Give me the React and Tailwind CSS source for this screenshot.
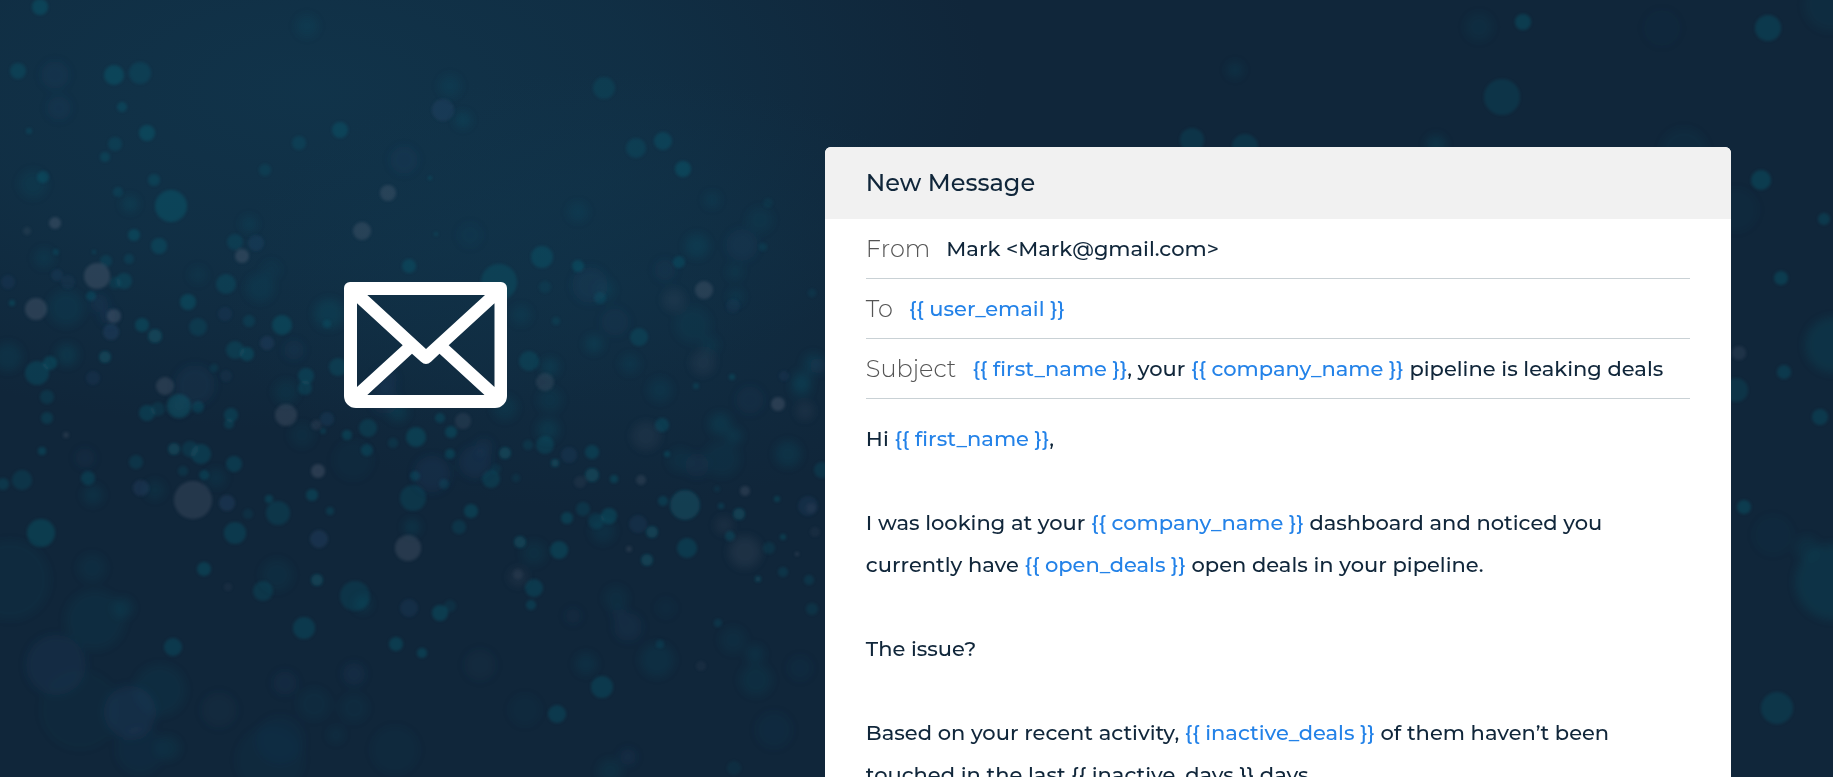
import React from "react";

// Each dot: [x, y, radius, strength]
const TEAL = [
  [40,7,8,0.9],[18,71,8,0.7],[114,75,10,0.9],[140,73,11,0.6],[122,107,5,0.8],[147,133,8,0.9],[115,144,7,0.6],[105,157,5,0.7],
  [43,177,6,0.8],[33,184,14,0.3],[154,180,6,0.7],[171,206,16,0.9],[118,192,5,0.6],[130,204,8,0.5],[134,235,6,0.9],[159,246,8,0.8],
  [340,130,8,0.8],[299,143,7,0.6],[265,170,6,0.5],[249,224,8,0.4],[235,242,8,0.6],[226,284,10,0.7],[188,302,8,0.9],[198,327,9,0.6],
  [282,325,10,0.9],[142,325,7,0.9],[155,336,7,1],[105,357,6,1],[124,281,8,0.7],[115,283,6,0.5],[106,261,6,0.6],[129,259,5,0.6],
  [235,350,9,0.7],[247,354,7,0.9],[50,363,7,0.9],[37,373,12,0.8],[67,355,11,0.5],[8,357,14,0.4],[66,308,18,0.35],[44,258,10,0.35],
  [409,266,7,0.8],[307,26,11,0.35],[306,376,8,0.8],[338,367,9,0.7],[329,314,15,0.5],[327,324,4,0.6],[214,368,4,0.5],[12,303,3,0.9],
  [29,131,3,0.7],[56,252,3,0.7],[94,252,2,0.8],[91,296,5,0.8],[249,321,6,0.6],[260,288,14,0.35],[271,270,10,0.2],[198,275,9,0.25],
  [604,88,11,0.55],[636,148,10,0.6],[663,141,9,0.8],[683,169,8,0.9],[450,86,11,0.35],[463,120,8,0.5],[712,200,8,0.35],[578,212,10,0.35],
  [542,257,11,0.8],[578,266,6,0.9],[499,282,18,0.7],[697,246,12,0.45],[679,262,6,0.8],[545,287,6,0.4],[600,298,6,0.6],[605,290,10,0.3],
  [639,337,9,0.7],[594,344,9,0.5],[529,361,10,0.7],[550,367,9,0.5],[630,364,10,0.35],[732,377,3,0.9],[556,321,4,0.5],[430,178,2,0.9],
  [436,234,2,0.7],[763,247,4,0.5],[736,297,8,0.35],[813,363,10,0.45],[802,380,10,0.45],[521,315,10,0.35],[693,325,18,0.25],[696,386,3,0.7],
  [760,220,13,0.25],[768,203,5,0.3],[735,272,8,0.3],[812,293,4,0.4],[710,345,9,0.3],
  [47,397,7,0.6],[47,418,6,0.7],[42,451,4,0.9],[22,480,10,0.6],[88,478,7,0.8],[93,495,10,0.4],[136,462,7,0.6],[147,413,8,0.8],
  [158,409,7,0.5],[179,406,12,0.9],[198,407,6,0.8],[231,415,7,0.8],[229,424,5,0.7],[174,449,6,1],[201,454,10,0.8],[190,449,8,0.6],
  [183,471,5,0.5],[204,475,5,0.8],[216,478,10,0.35],[234,464,8,0.8],[235,533,11,0.8],[278,513,12,0.65],[269,499,4,0.9],[312,495,6,0.9],
  [330,511,4,0.7],[41,533,14,0.85],[204,569,7,0.9],[263,591,10,0.65],[317,580,6,1],[355,596,15,0.6],[363,604,8,0.5],[304,628,11,0.8],
  [173,647,9,0.8],[396,644,7,0.9],[123,608,10,0.45],[92,568,14,0.25],[95,620,30,0.25],[277,575,16,0.25],[286,392,12,0.3],[305,388,7,0.7],
  [347,435,5,0.9],[368,428,9,0.7],[367,450,6,0.8],[416,437,10,0.9],[415,476,5,0.8],[413,498,13,0.65],[412,527,8,0.5],[323,431,3,0.7],
  [302,435,12,0.25],[3,484,6,0.7],[10,580,40,0.2],[354,708,14,0.2],[314,704,16,0.2],[336,735,8,0.25],[160,690,26,0.25],[168,748,12,0.3],
  [393,443,5,0.5],[398,412,10,0.5],[353,460,20,0.15],[248,514,5,0.4],[155,490,10,0.3],[270,760,34,0.15],[395,750,24,0.15],[80,710,40,0.1],
  [440,418,5,0.8],[451,432,6,0.9],[450,454,5,0.9],[505,453,6,1],[545,445,9,0.7],[548,430,11,0.5],[528,445,5,0.5],[555,463,4,1],
  [592,452,7,0.8],[592,475,7,1],[614,479,4,0.9],[662,425,7,0.8],[720,424,11,0.5],[734,436,8,0.5],[667,454,3,0.9],[788,454,13,0.45],
  [822,470,8,0.6],[722,459,18,0.25],[491,479,9,0.7],[496,469,5,0.4],[471,511,7,0.9],[459,527,7,0.6],[444,484,5,0.6],[567,518,6,0.9],
  [583,509,7,0.6],[609,516,8,0.9],[596,521,8,0.6],[603,531,12,0.35],[663,501,5,0.8],[685,505,15,0.95],[739,514,6,1],[721,506,3,0.8],
  [777,499,3,0.9],[652,532,6,1],[687,548,10,0.8],[647,560,6,1],[520,542,6,1],[559,550,9,0.9],[534,553,12,0.3],[534,588,9,0.8],
  [531,605,5,0.8],[440,613,8,0.9],[450,606,6,0.4],[422,653,5,0.9],[730,536,5,0.8],[769,548,6,0.5],[783,537,3,0.9],[758,579,3,1],
  [783,572,5,0.6],[809,580,5,0.6],[812,609,6,0.5],[718,623,4,0.6],[733,640,13,0.25],[756,680,16,0.3],[755,654,9,0.4],[586,664,11,0.35],
  [602,687,11,0.8],[557,714,9,0.8],[657,660,17,0.35],[660,644,4,0.6],[616,598,12,0.25],[666,608,10,0.15],[525,710,16,0.15],[610,771,12,0.3],
  [734,768,7,0.3],[505,408,12,0.4],[550,400,12,0.3],[660,390,12,0.35],[801,388,10,0.4],[680,460,12,0.25],[516,478,4,0.4],[717,489,3,0.4],
  [1523,22,8,0.9],[1768,28,13,0.8],[1479,27,14,0.25],[1235,70,8,0.4],[1502,97,18,0.6],[1192,140,12,0.6],[1245,147,13,0.6],[1436,145,10,0.5],
  [1684,152,24,0.2],[1761,180,10,0.9],[1830,5,26,0.25],[1824,219,6,0.8],[1781,278,7,0.9],[1784,372,7,0.8],[1736,390,12,0.55],[1833,345,28,0.5],
  [1736,210,22,0.15],[1820,417,8,0.8],[1744,507,7,0.9],[1777,708,16,0.65],[1833,582,38,0.5],[1807,548,12,0.3],[1773,535,20,0.12],
];

const MUTED = [
  [55,223,6,1],[27,231,4,0.5],[97,276,13,1],[36,309,11,1],[114,316,7,1],[242,256,7,1],[388,193,8,0.9],[362,231,9,0.9],[165,386,9,0.9],
  [704,290,9,0.9],[674,300,11,0.4],[703,363,12,0.4],[545,382,9,0.7],[286,415,11,0.9],[193,500,19,0.8],[318,471,7,1],[66,435,3,0.7],
  [316,425,5,0.6],[408,548,13,0.9],[463,421,8,0.6],[646,436,14,0.4],[778,404,7,1],[805,411,9,0.4],[641,480,5,0.7],[745,491,5,0.8],
  [724,525,9,0.4],[745,552,16,0.5],[580,482,6,0.4],[518,577,9,0.45],[518,574,5,0.4],[629,549,3,0.7],[797,554,2,0.9],[1739,353,7,0.6],
  [179,406,10,0.3],[811,508,5,0.4],[228,587,4,0.3],[815,532,5,0.3],[701,666,5,0.3],
];

const BLUE = [
  [256,243,8,0.7],[111,332,8,0.9],[267,343,7,0.8],[225,314,7,0.5],[59,108,12,0.35],[55,75,14,0.35],[404,160,14,0.35],[443,110,11,0.8],
  [590,285,18,0.4],[742,245,16,0.4],[141,488,8,0.8],[227,503,8,0.9],[319,539,9,0.9],[56,665,30,0.45],[130,712,26,0.6],[85,458,10,0.3],
  [285,683,12,0.35],[354,674,11,0.45],[327,419,7,0.7],[219,710,18,0.2],[409,608,9,0.6],[475,462,16,0.5],[484,447,9,0.4],[432,474,18,0.5],
  [638,524,9,0.6],[808,506,10,0.6],[697,465,12,0.4],[628,627,14,0.4],[619,613,8,0.3],[800,668,12,0.25],[774,730,18,0.25],[573,616,8,0.3],
  [628,757,8,0.5],[480,665,16,0.2],[569,455,8,0.6],[1662,28,18,0.15],[57,275,6,0.6],[68,282,7,0.4],[99,303,9,0.5],[294,350,10,0.4],
  [93,378,7,0.5],[195,385,20,0.4],[280,740,24,0.25],[140,750,24,0.25],[665,270,11,0.3],[733,306,7,0.4],[615,322,14,0.3],[750,400,14,0.3],
  [385,400,14,0.4],[385,380,12,0.5],[8,282,7,0.5],[470,235,12,0.25],[108,316,8,0.5],[226,376,6,0.4],[784,376,5,0.5],[818,366,8,0.4],
];

function Dots({ dots, fill, peak }) {
  return dots.map(([x, y, r, strength]) => (
    <circle key={`${x}-${y}-${r}`} cx={x} cy={y} r={r} fill={fill} opacity={strength * peak} />
  ));
}

const LAYERS = [
  { filter: "url(#haze)", keep: ([, , r, strength]) => r >= 20 || (r >= 8 && strength <= 0.5) },
  { filter: "url(#soft)", keep: ([, , r, strength]) => r < 20 && (r < 8 || strength > 0.5) },
];

function Backdrop() {
  return (
    <svg
      className="absolute inset-0 -z-10 h-full w-full"
      viewBox="0 0 1833 777"
      preserveAspectRatio="xMidYMid slice"
      aria-hidden="true"
    >
      <defs>
        <radialGradient id="glow">
          <stop offset="0" stopColor="#113c54" stopOpacity="0.6" />
          <stop offset="0.5" stopColor="#113c54" stopOpacity="0.4" />
          <stop offset="1" stopColor="#113c54" stopOpacity="0" />
        </radialGradient>
        <filter id="soft" x="-5%" y="-5%" width="110%" height="110%">
          <feGaussianBlur stdDeviation="1.6" />
        </filter>
        <filter id="haze" x="-5%" y="-5%" width="110%" height="110%">
          <feGaussianBlur stdDeviation="4" />
        </filter>
      </defs>
      <rect width="1833" height="777" fill="#10263a" />
      <ellipse cx="310" cy="90" rx="680" ry="340" fill="url(#glow)" />
      <ellipse cx="600" cy="290" rx="380" ry="220" fill="url(#glow)" opacity="0.5" />
      {LAYERS.map(({ filter, keep }) => (
        <g key={filter} filter={filter}>
          <Dots dots={TEAL.filter(keep)} fill="#168495" peak={0.27} />
          <Dots dots={BLUE.filter(keep)} fill="#345a8c" peak={0.25} />
          <Dots dots={MUTED.filter(keep)} fill="#7f8096" peak={0.24} />
        </g>
      ))}
    </svg>
  );
}

function Envelope() {
  return (
    <svg className="h-[126px] w-[163px]" viewBox="0 0 163 126" role="img" aria-label="Email">
      <path
        fill="#fff"
        fillRule="evenodd"
        d="M6 0H157A6 6 0 0 1 163 6V114A12 12 0 0 1 151 126H12A12 12 0 0 1 0 114V6A6 6 0 0 1 6 0Z
           M23.3 13H141L82 67Z
           M13 21.3L58.7 63.3L13 105Z
           M150.5 21.3L104.7 63.3L150.5 105Z
           M23.3 113L68 71.7L77 79.7Q82 84.3 87 79.7L95.5 71.7L140.5 113Z"
      />
    </svg>
  );
}

function Token({ children }) {
  return <span className="text-[#2382e8]">{`{{ ${children} }}`}</span>;
}

const ROW = "flex h-[60px] items-center gap-4 border-b border-[#c9d1d5]";
const LABEL = "shrink-0 text-2xl font-light text-[#555]";
const INPUT = "min-w-0 flex-1 bg-transparent outline-none";

export default function App() {
  return (
    <main className="relative isolate grid h-screen grid-cols-[45%_1fr] overflow-hidden bg-[#10263a] font-['Montserrat','Inter',sans-serif] text-[21px] font-medium text-[#10263a]">
      <Backdrop />
      <div className="flex justify-center pt-[282px] pl-[26px]">
        <Envelope />
      </div>
      <div className="pt-[147px] pr-[102px]">
        <form className="min-h-full overflow-hidden rounded-t-md bg-white">
          <h1 className="flex h-[72px] items-center bg-[#f1f1f1] px-[41px] text-2xl font-medium">New Message</h1>
          <div className="px-[41px]">
            <div className={ROW}>
              <label htmlFor="from" className={LABEL}>From</label>
              <input id="from" className={INPUT} defaultValue="Mark <Mark@gmail.com>" />
            </div>
            <div className={ROW}>
              <label htmlFor="to" className={LABEL}>To</label>
              <input id="to" className={`${INPUT} text-[#2382e8]`} defaultValue="{{ user_email }}" />
            </div>
            <div className={ROW}>
              <span id="subject-label" className={LABEL}>Subject</span>
              <div
                role="textbox"
                aria-labelledby="subject-label"
                contentEditable
                suppressContentEditableWarning
                className="min-w-0 flex-1 whitespace-nowrap outline-none"
              >
                <Token>first_name</Token>, your <Token>company_name</Token> pipeline is leaking deals
              </div>
            </div>
            <div
              role="textbox"
              aria-label="Message"
              aria-multiline="true"
              contentEditable
              suppressContentEditableWarning
              className="flex flex-col gap-[42px] pt-[19px] leading-[42px] outline-none"
            >
              <p>
                Hi <Token>first_name</Token>,
              </p>
              <p>
                I was looking at your <Token>company_name</Token> dashboard and noticed you
                <br />
                currently have <Token>open_deals</Token> open deals in your pipeline.
              </p>
              <p>The issue?</p>
              <p>
                Based on your recent activity, <Token>inactive_deals</Token> of them haven’t been
                <br />
                touched in the last {"{{ inactive_days }}"} days.
              </p>
            </div>
          </div>
        </form>
      </div>
    </main>
  );
}
